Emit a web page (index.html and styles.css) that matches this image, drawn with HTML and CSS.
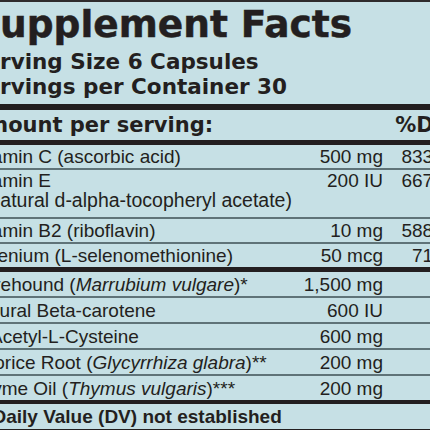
FILE: index.html
```html
<!DOCTYPE html>
<html lang="en">
<head>
<meta charset="UTF-8" />
<meta name="viewport" content="width=device-width, initial-scale=1" />
<title>Supplement Facts</title>
<link rel="stylesheet" href="styles.css">
</head>
<body>
<section class="label" aria-label="Supplement Facts">
  <h1 class="label-title">Supplement Facts</h1>
  <div class="serving">
    <p>Serving Size 6 Capsules</p>
    <p>Servings per Container 30</p>
  </div>

  <div class="row head">
    <span class="name">Amount per serving:</span>
    <span class="amount"></span>
    <span class="dv">%DV</span>
  </div>

  <div class="group with-dv">
    <div class="row">
      <span class="name">Vitamin C (ascorbic acid)</span>
      <span class="amount">500 mg</span>
      <span class="dv">833%</span>
    </div>
    <div class="row two-line">
      <span class="name">Vitamin E<br><span class="sub">(natural d-alpha-tocopheryl acetate)</span></span>
      <span class="amount">200 IU</span>
      <span class="dv">667%</span>
    </div>
    <div class="row">
      <span class="name">Vitamin B2 (riboflavin)</span>
      <span class="amount">10 mg</span>
      <span class="dv">588%</span>
    </div>
    <div class="row">
      <span class="name">Selenium (L-selenomethionine)</span>
      <span class="amount">50 mcg</span>
      <span class="dv">71%</span>
    </div>
  </div>

  <div class="group no-dv">
    <div class="row">
      <span class="name">Horehound (<em>Marrubium vulgare</em>)*</span>
      <span class="amount">1,500 mg</span>
      <span class="dv">&dagger;</span>
    </div>
    <div class="row">
      <span class="name">Natural Beta-carotene</span>
      <span class="amount">600 IU</span>
      <span class="dv">&dagger;</span>
    </div>
    <div class="row">
      <span class="name">N-Acetyl-L-Cysteine</span>
      <span class="amount">600 mg</span>
      <span class="dv">&dagger;</span>
    </div>
    <div class="row">
      <span class="name">Licorice Root (<em>Glycyrrhiza glabra</em>)**</span>
      <span class="amount">200 mg</span>
      <span class="dv">&dagger;</span>
    </div>
    <div class="row">
      <span class="name">Thyme Oil (<em>Thymus vulgaris</em>)***</span>
      <span class="amount">200 mg</span>
      <span class="dv">&dagger;</span>
    </div>
  </div>

  <p class="footnote">&dagger;%Daily Value (DV) not established</p>
</section>
</body>
</html>
```

FILE: styles.css
```css
/* Reset and base */
* {
  box-sizing: border-box;
}
html, body {
  height: 100%;
}
body {
  margin: 0;
  overflow: hidden;
  background: #c6e0e5;
  color: #231f20;
  font-family: "Liberation Sans", Arial, sans-serif;
}
p {
  margin: 0;
}

/* Label box (wider than the window, left edge is cropped) */
.label {
  width: 480px;
  margin-left: -30px;
  border-top: 2px solid #2e2b2c;
}

/* Title and serving info */
.label-title {
  margin: 0;
  padding-left: 3px;
  font-family: "DejaVu Sans", sans-serif;
  font-weight: 700;
  font-size: 37.5px;
  line-height: 44px;
  -webkit-text-stroke: 0.5px #231f20;
}
.serving {
  padding: 3px 0 5px;
  font-family: "DejaVu Sans", sans-serif;
  font-weight: 700;
  font-size: 21.5px;
  line-height: 25px;
  border-bottom: 6px solid #231f20;
}

/* Rows */
.row {
  display: grid;
  grid-template-columns: minmax(0, 1fr) 100px 67px;
  align-items: start;
  font-size: 19px;
  line-height: 22px;
  padding-top: 1px;
  border-bottom: 2px solid #5f7378;
  white-space: nowrap;
}
.row .amount,
.row .dv {
  text-align: right;
}
.row em {
  font-style: italic;
}
.row.two-line {
  line-height: 20px;
  padding-bottom: 6px;
}
.row .sub {
  display: inline-block;
  padding-left: 13px;
  line-height: 19px;
  font-size: 19.5px;
}

.row.head {
  font-family: "DejaVu Sans", sans-serif;
  font-weight: 700;
  font-size: 21px;
  line-height: 29px;
  border-bottom: 5px solid #231f20;
}

/* Groups end with a heavy rule */
.group .row:last-child {
  border-bottom: 5px solid #231f20;
}
.group.no-dv .row {
  line-height: 23px;
}
.group.no-dv .row:last-child {
  border-bottom-width: 4px;
}

/* Footnote */
.footnote {
  padding-top: 1px;
  text-indent: -5px;
  font-weight: 700;
  font-size: 19px;
  line-height: 24px;
  border-bottom: 4px solid #231f20;
}
```
